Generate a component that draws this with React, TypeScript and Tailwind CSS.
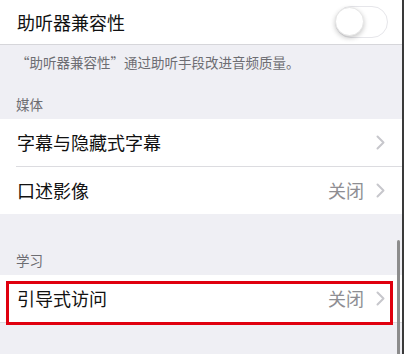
const Chevron = () => (
  <svg width="9" height="15" viewBox="0 0 9 15" className="shrink-0">
    <path d="M1.5 1.5 L7.5 7.5 L1.5 13.5" fill="none" stroke="#c7c7cc" strokeWidth="2" strokeLinecap="round" strokeLinejoin="round" />
  </svg>
)

const Row = ({ label, value }: { label: string; value?: string }) => (
  <div className="h-[47px] flex items-center justify-between pl-[17px] pr-[17px] bg-white">
    <span className="text-[18px] text-[#111]">{label}</span>
    <div className="flex items-center gap-[12px]">
      {value && <span className="text-[18px] text-[#8e8e93]">{value}</span>}
      <Chevron />
    </div>
  </div>
)

const App = () => {
  return (
    <div
      className="relative w-[404px] h-[354px] overflow-hidden bg-[#efeff4] border-r-2 border-[#3a3a3a]"
      style={{ fontFamily: '"Noto Sans CJK SC", "Noto Sans", sans-serif' }}
    >
      {/* hearing aid toggle */}
      <div className="h-[44px] bg-white flex items-center justify-between pl-[17px] pr-[14px]">
        <span className="text-[18px] text-[#111]">助听器兼容性</span>
        <div className="w-[53px] h-[32px] rounded-full border-[1.5px] border-[#e6e6ea] bg-white relative">
          <div className="absolute left-[-1px] top-[0px] w-[29px] h-[29px] rounded-full bg-white shadow-[0_2px_5px_rgba(0,0,0,0.22)] border border-[#e6e6e6]" />
        </div>
      </div>
      <div className="h-px bg-[#d6d6da]" />

      <div className="pl-4 pt-[8px] pb-[6px] text-[13.5px] leading-[18px] text-[#6d6d72]">
        <p>“助听器兼容性”通过助听手段改进音频质量。</p>
        <p className="mt-[24px]">媒体</p>
      </div>

      <div className="bg-white">
        <Row label="字幕与隐藏式字幕" />
        <div className="ml-4 h-px bg-[#dcdce0]" />
        <Row label="口述影像" value="关闭" />
      </div>

      <div className="pl-4 pt-[37px] pb-[6px] text-[13.5px] leading-[18px] text-[#6d6d72]">
        <p>学习</p>
      </div>

      <div className="relative">
        <Row label="引导式访问" value="关闭" />
        <div className="absolute left-[6px] top-[6px] w-[387px] h-[44px] border-[3px] border-[#e0000f]" />
      </div>
      <div className="h-px bg-[#dcdce0]" />

      {/* scroll indicator */}
      <div className="absolute right-[2px] top-[240px] w-[3px] h-[130px] rounded-full bg-[#8c8c8c]" />
    </div>
  )
}

export default App
